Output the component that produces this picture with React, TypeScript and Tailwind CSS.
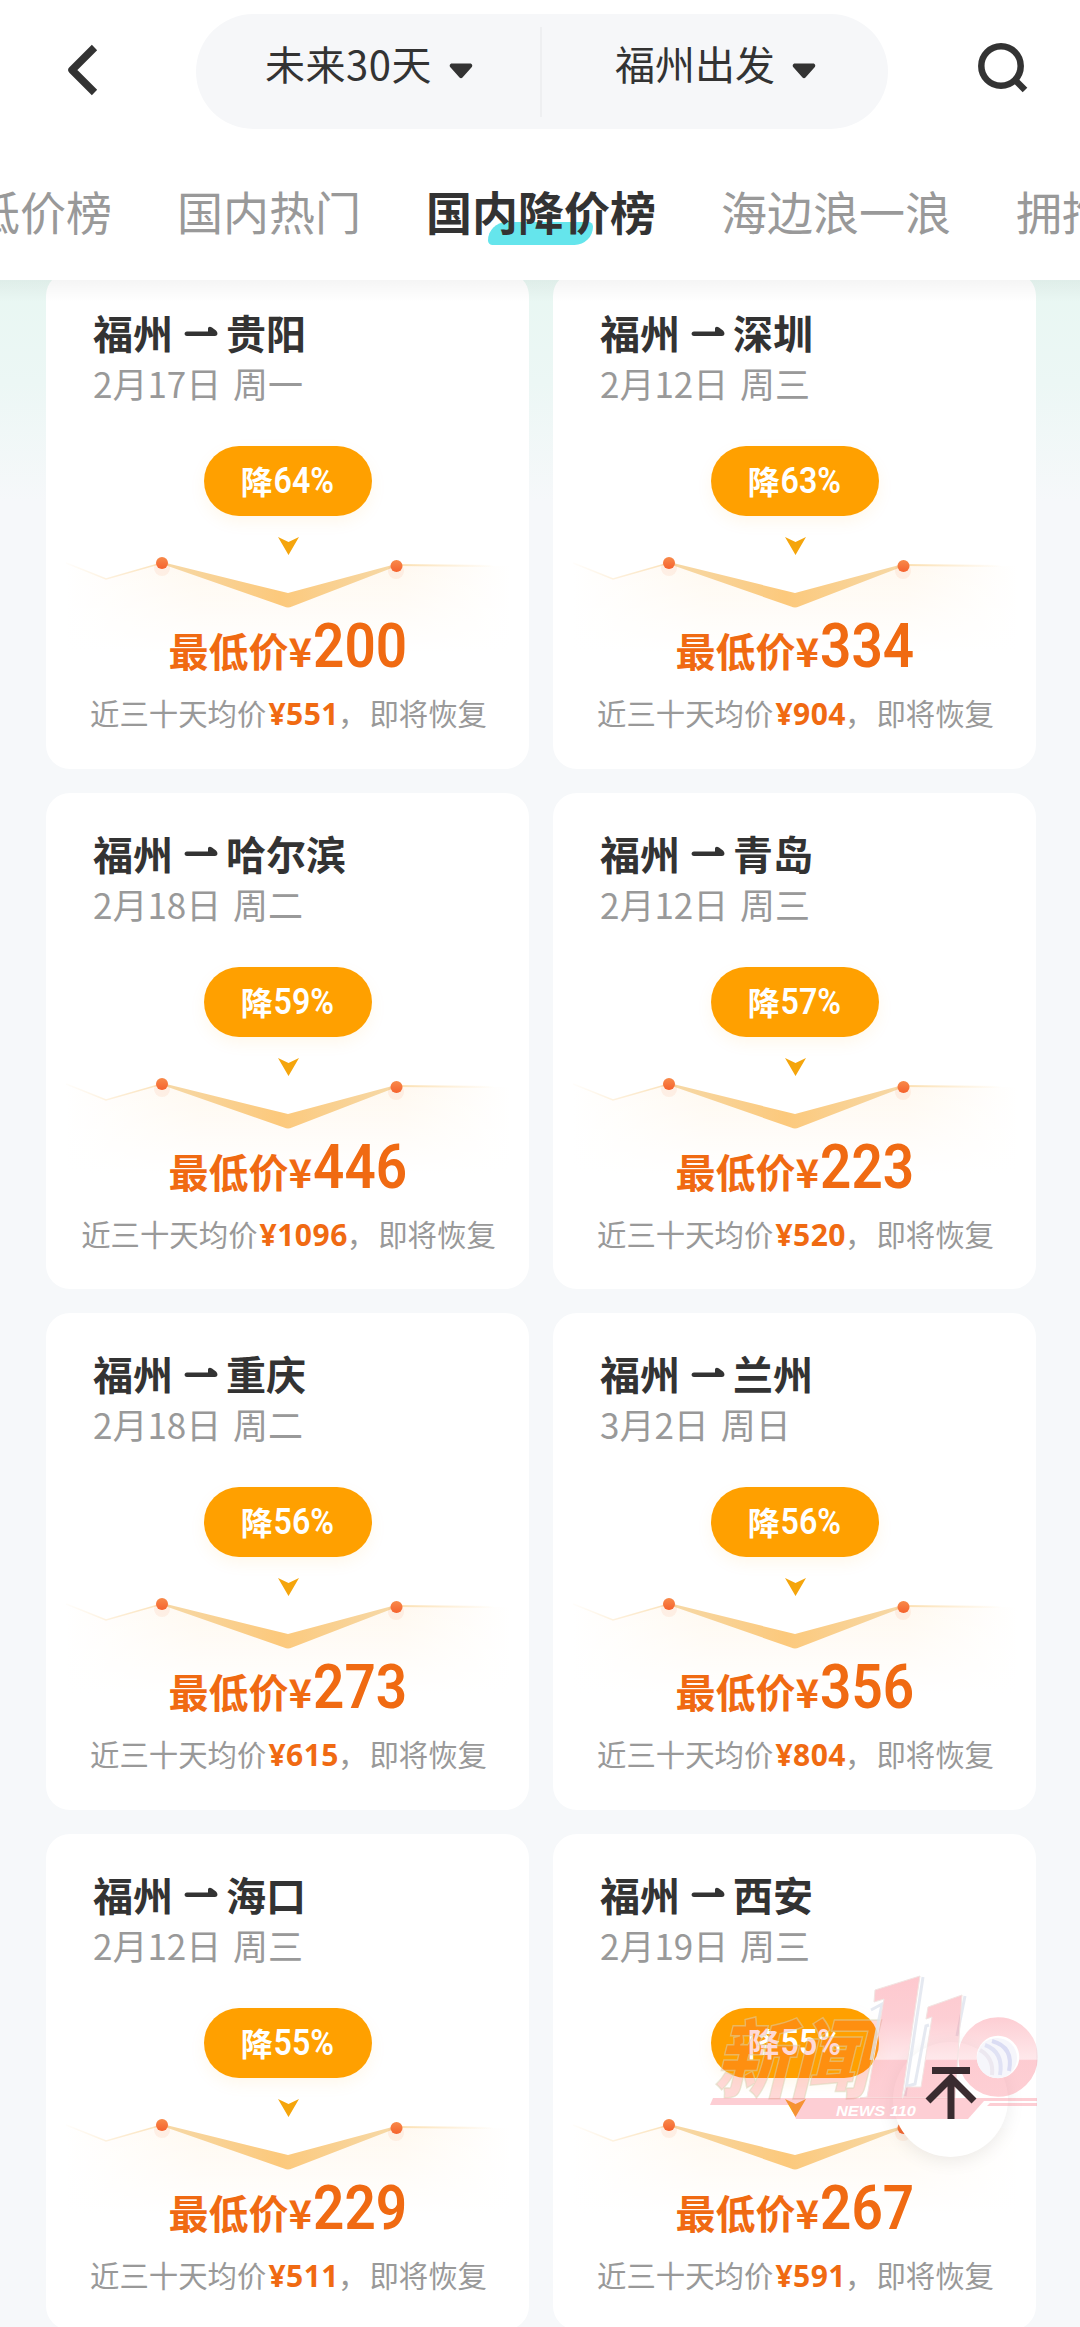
import React from "react";

type Deal = { to: string; date: string; drop: string; price: string; avg: string };

const deals: Deal[] = [
  { to: "贵阳", date: "2月17日 周一", drop: "64%", price: "200", avg: "551" },
  { to: "深圳", date: "2月12日 周三", drop: "63%", price: "334", avg: "904" },
  { to: "哈尔滨", date: "2月18日 周二", drop: "59%", price: "446", avg: "1096" },
  { to: "青岛", date: "2月12日 周三", drop: "57%", price: "223", avg: "520" },
  { to: "重庆", date: "2月18日 周二", drop: "56%", price: "273", avg: "615" },
  { to: "兰州", date: "3月2日 周日", drop: "56%", price: "356", avg: "804" },
  { to: "海口", date: "2月12日 周三", drop: "55%", price: "229", avg: "511" },
  { to: "西安", date: "2月19日 周三", drop: "55%", price: "267", avg: "591" },
];

function Caret() {
  return (
    <svg className="ml-[17px] mt-[16px] h-4 w-6" viewBox="0 0 24 16">
      <path d="M3 0.5H21C23.4 0.5 24 3 22.4 4.6L13.5 14.6C12.6 15.6 11.4 15.6 10.5 14.6L1.6 4.6C0 3 0.6 0.5 3 0.5Z" fill="#333" />
    </svg>
  );
}

function Header() {
  return (
    <header className="relative z-10 h-[280px] overflow-hidden bg-white">
      <div className="flex h-[129px] items-start pt-[14px]">
        <svg className="ml-[66px] mt-[29px] h-[54px] w-[34px]" viewBox="0 0 34 54" fill="none" stroke="#333" strokeWidth="7.5" strokeLinejoin="round">
          <path d="M28.5 4.5L6 27L28.5 49.5" />
        </svg>
        <div className="ml-24 flex h-[115px] w-[692px] items-center rounded-full bg-[#f6f7f9]">
          <div className="flex h-full w-[344px] items-center pb-[17px] pl-[69px] text-[40px] tracking-[0.5px] text-[#333]">
            未来30天
            <Caret />
          </div>
          <div className="h-[90px] w-[2px] bg-[#eeeff1]" />
          <div className="flex h-full flex-1 items-center pb-[17px] pl-[73px] text-[40px] text-[#333]">
            福州出发
            <Caret />
          </div>
        </div>
        <svg className="ml-[88px] mt-[28px] h-[52px] w-[52px]" viewBox="0 0 52 52" fill="none" stroke="#333" strokeWidth="6.5">
          <circle cx="25" cy="24" r="19.7" />
          <path d="M38 37L49 48" />
        </svg>
      </div>
      <nav className="-ml-[72px] flex w-[1400px] gap-[65px] whitespace-nowrap pt-[47px] text-[46px] leading-[68px] text-[#999]">
        <span>低低价榜</span>
        <span>国内热门</span>
        <span className="relative font-bold text-[#333]">
          <i className="absolute left-[62px] top-[46px] h-[23px] w-[105px] rounded-br-[20px] rounded-tl-[20px] rounded-bl-[5px] rounded-tr-[5px] bg-[#65e5ec]" />
          <span className="relative">国内降价榜</span>
        </span>
        <span>海边浪一浪</span>
        <span>拥抱春天</span>
      </nav>
    </header>
  );
}

function Trend({ id }: { id: string }) {
  return (
    <svg className="block h-[120px] w-full" viewBox="0 0 483 120" fill="none">
      <defs>
        <linearGradient id={id + "f"} x1="0" y1="0" x2="0" y2="1">
          <stop offset="0" stopColor="#fff" stopOpacity="0" />
          <stop offset="1" stopColor="#fff" stopOpacity="1" />
        </linearGradient>
        <linearGradient id={id + "h"} x1="0" y1="0" x2="1" y2="0">
          <stop offset="0" stopColor="#fff8ee" stopOpacity="0" />
          <stop offset="0.3" stopColor="#fff8ee" stopOpacity="0.9" />
          <stop offset="0.75" stopColor="#fff8ee" stopOpacity="0.9" />
          <stop offset="1" stopColor="#fff8ee" stopOpacity="0" />
        </linearGradient>
        <linearGradient id={id + "l"} x1="14" x2="112" y1="0" y2="0" gradientUnits="userSpaceOnUse">
          <stop stopColor="#fbe3bd" stopOpacity="0" />
          <stop offset="1" stopColor="#fbe3bd" />
        </linearGradient>
        <linearGradient id={id + "r"} x1="350" x2="448" y1="0" y2="0" gradientUnits="userSpaceOnUse">
          <stop stopColor="#fbdfb0" />
          <stop offset="1" stopColor="#fbdfb0" stopOpacity="0" />
        </linearGradient>
        <linearGradient id={id + "v"} x1="116" x2="350" y1="0" y2="0" gradientUnits="userSpaceOnUse">
          <stop stopColor="#f6d9a8" />
          <stop offset="0.5" stopColor="#fcc97c" />
          <stop offset="1" stopColor="#f6d9a8" />
        </linearGradient>
        <linearGradient id={id + "d"} x1="0" y1="0" x2="0" y2="1">
          <stop stopColor="#f88a4a" />
          <stop offset="1" stopColor="#f5622e" />
        </linearGradient>
      </defs>
      <path d="M20 28L60 42L116 26L242 68L350 28L465 29V115H20Z" fill={"url(#" + id + "h)"} />
      <path d="M20 26H465V116H20Z" fill={"url(#" + id + "f)"} />
      <path d="M20 26L60 42L116 26" stroke={"url(#" + id + "l)"} strokeWidth="1.5" />
      <path d="M350 28L450 29" stroke={"url(#" + id + "r)"} strokeWidth="2" />
      <path d="M116 25L242 56L350 27L351 29L246 69.500Q242 71.500 238 69.500L116 27Z" fill={"url(#" + id + "v)"} />
      <path d="M232 0L242.500 5L253 0L242.500 18Z" fill="#f5a50c" />
      <circle cx="350" cy="34" r="8" fill="#f7602c" opacity="0.08" />
      <circle cx="116" cy="31" r="8" fill="#f7602c" opacity="0.08" />
      <circle cx="116" cy="26" r="6" fill={"url(#" + id + "d)"} />
      <circle cx="350.500" cy="29" r="6" fill={"url(#" + id + "d)"} />
    </svg>
  );
}

function Card({ deal, id }: { deal: Deal; id: string }) {
  return (
    <article className="flex h-[496.500px] flex-col items-center rounded-[24px] bg-white">
      <div className="flex w-full items-center pl-[47px] pt-[30px] text-[40px] font-bold leading-[60px] text-[#333]">
        福州
        <svg className="ml-[10px] mr-[7px] mt-[1px] h-4 w-[36px]" viewBox="0 0 36 16" fill="#333">
          <path d="M4 6.500H25V4C25 1.500 27 1.200 29 2.400L33 5.500C35.500 8 34.500 11 32 11H4C0.800 11 0.800 6.500 4 6.500Z" />
        </svg>
        {deal.to}
      </div>
      <div className="mt-[1px] w-full pl-[47px] text-[35px] leading-[40px] text-[#999] [word-spacing:4px]">{deal.date}</div>
      <div className="mt-[43px] flex h-[70px] w-[168px] shrink-0 items-center justify-center rounded-full bg-[#ffa000] pb-[2px] text-[32px] font-bold text-white shadow-[0_6px_16px_rgba(255,160,0,0.08)]">
        <span>降</span>
        <span className="-mx-[4px] inline-block origin-center scale-x-[.87] pt-[2px] font-[Roboto] text-[37px] font-semibold">{deal.drop}</span>
      </div>
      <div className="mt-[21px] h-[78px] w-full">
        <Trend id={id} />
      </div>
      <div className="relative -mt-[7px] flex h-[76px] items-baseline text-[40px] font-bold leading-[76px] text-[#f06a12]">
        最低价¥
        <span className="-ml-[5px] -mr-[7px] inline-block scale-x-[.885] font-[Roboto] text-[62px] font-semibold">{deal.price}</span>
      </div>
      <div className="relative mt-[6px] whitespace-nowrap pl-[2px] text-[29.400px] leading-[44px] text-[#999]">
        近三十天均价<span className="mx-[2px] font-['Open_Sans'] text-[30px] font-bold tracking-[0.5px] text-[#f06a12]">¥{deal.avg}</span>
        <span className="-ml-[3px] mr-[2px]">，</span>即将恢复
      </div>
    </article>
  );
}

function BackToTop() {
  return (
    <div className="absolute left-[893px] top-[2042px] flex h-[115px] w-[115px] justify-center rounded-full bg-white pt-[24px] shadow-[0_4px_18px_rgba(0,0,0,0.08)]">
      <svg className="h-[54px] w-[52px]" viewBox="0 0 52 54" />
    </div>
  );
}

function TopArrow() {
  return (
    <svg className="absolute left-[925px] top-[2066px] h-[54px] w-[52px]" viewBox="0 0 52 54" fill="none" stroke="#3a2c30" strokeWidth="7">
      <path d="M7 4.500H45M26 53V12M3 35L26 12L49 35" />
    </svg>
  );
}

function Watermark() {
  return (
    <svg className="absolute left-[705px] top-[1970px] h-[155px] w-[340px]" viewBox="705 1970 340 155">
      <defs>
        <linearGradient id="wm" x1="0" y1="1975" x2="0" y2="2120" gradientUnits="userSpaceOnUse">
          <stop stopColor="#fa7080" stopOpacity="0.38" />
          <stop offset="0.3" stopColor="#fa7080" stopOpacity="0.34" />
          <stop offset="0.58" stopColor="#fa7080" stopOpacity="0.16" />
          <stop offset="0.59" stopColor="#fa7080" stopOpacity="0.36" />
          <stop offset="1" stopColor="#fa7080" stopOpacity="0.32" />
        </linearGradient>
      </defs>
      <g transform="translate(713 2091) skewX(-14) scale(0.9 1)">
        <text fontSize="86" fontWeight="900" fill="#fa5048" fillOpacity="0.22" stroke="#d8d8b8" strokeOpacity="0.5" strokeWidth="1.5" fontFamily="Noto Sans CJK SC">新闻</text>
      </g>
      <g fill="none" stroke="#dfe3ee" strokeOpacity="0.8" strokeWidth="3">
        <path d="M923 1977L905 2096M871 2010L882 2004L871 2060M929 2025L926 2026L915 2084L908 2086M965 1996L957 2036" />
      </g>
      <g fill="url(#wm)" stroke="#f2e4e2" strokeWidth="1">
        <path d="M875 1990L920 1976L902 2098H860L867 2097L884 1999L874 2002Z" />
        <path d="M928 2007L962 1995L955 2098H903L906 2087H921L932 2017L926 2019Z" />
      </g>
      <path d="M713 2098H1037V2101H984L968 2119H796L790 2105H710Z" fill="#fa7080" fillOpacity="0.34" />
      <path d="M990 2103H1037V2106H987Z" fill="#fa7080" fillOpacity="0.34" />
      <circle cx="998" cy="2057" r="30.500" fill="none" stroke="url(#wm)" strokeWidth="18.500" />
      <circle cx="997" cy="2058" r="20" fill="#f6f6fb" />
      <g fill="none" strokeWidth="4">
        <path d="M985 2045Q1004 2052 1000 2075" stroke="#e0e2f4" />
        <path d="M992 2041Q1014 2047 1009 2071" stroke="#dadcf3" />
        <path d="M980 2050Q994 2058 992 2075" stroke="#ece8f0" />
      </g>
      <text x="836" y="2115.500" fontSize="14" fontWeight="700" fontStyle="italic" fill="#fff" textLength="80" lengthAdjust="spacingAndGlyphs" fontFamily="Liberation Sans">NEWS 110</text>
    </svg>
  );
}

export default function App() {
  return (
    <div className="relative h-[2327px] w-[1080px] overflow-hidden bg-[#f6f8fa] font-['Noto_Sans_CJK_SC',sans-serif]">
      <Header />
      <main className="relative -mt-[8px] bg-[linear-gradient(180deg,#e8f7f2_0px,#ecf7f5_110px,#f6f8fa_230px)] px-[46px]">
        <div className="grid grid-cols-[483px_483px] gap-x-[24px] gap-y-[24px]">
          {deals.map((deal, i) => (
            <Card key={deal.to} deal={deal} id={"trend" + i} />
          ))}
        </div>
        <div className="absolute inset-x-0 top-[8px] h-[22px] bg-linear-to-b from-black/4 to-transparent" />
      </main>
      <BackToTop />
      <Watermark />
      <TopArrow />
    </div>
  );
}
